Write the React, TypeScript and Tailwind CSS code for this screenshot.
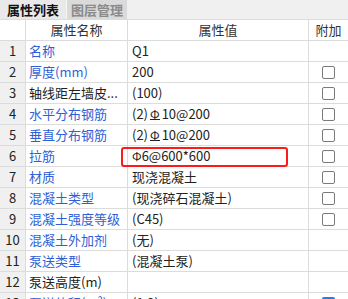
import React from 'react';

type Row = {
  no: number;
  name: string;
  blue: boolean;
  value: React.ReactNode;
  check: 'none' | 'empty' | 'checked';
};

// HRB400 steel grade symbol: Φ with a base bar
function Steel3() {
  return <span className="inline-block border-b border-[#222] leading-[11px] text-[12px] mx-[2px]">Φ</span>;
}

const ROWS: Row[] = [
  { no: 1, name: '名称', blue: true, value: 'Q1', check: 'none' },
  { no: 2, name: '厚度(mm)', blue: true, value: '200', check: 'empty' },
  { no: 3, name: '轴线距左墙皮...', blue: false, value: '(100)', check: 'empty' },
  { no: 4, name: '水平分布钢筋', blue: true, value: <>(2)<Steel3 />10@200</>, check: 'empty' },
  { no: 5, name: '垂直分布钢筋', blue: true, value: <>(2)<Steel3 />10@200</>, check: 'empty' },
  { no: 6, name: '拉筋', blue: true, value: <><span className="text-[12px]">Φ</span>6@600*600</>, check: 'empty' },
  { no: 7, name: '材质', blue: true, value: '现浇混凝土', check: 'empty' },
  { no: 8, name: '混凝土类型', blue: true, value: '(现浇碎石混凝土)', check: 'empty' },
  { no: 9, name: '混凝土强度等级', blue: true, value: '(C45)', check: 'empty' },
  { no: 10, name: '混凝土外加剂', blue: true, value: '(无)', check: 'none' },
  { no: 11, name: '泵送类型', blue: true, value: '(混凝土泵)', check: 'none' },
  { no: 12, name: '泵送高度(m)', blue: false, value: '', check: 'none' },
  { no: 13, name: '泵送体积(m³)', blue: true, value: '(1.2)', check: 'checked' },
];

const FONT = "font-['Microsoft_YaHei','Noto_Sans_CJK_SC',sans-serif]";

export default function App() {
  return (
    <div className={`w-[348px] h-[299px] overflow-hidden bg-white text-[13px] text-[#222] ${FONT}`}>
      {/* Tabs */}
      <div className="flex h-[20px] bg-[#f0f0f0] border-b border-[#dcdcdc]">
        <div className="w-[67px] bg-[#e9e9e9] flex items-center justify-center font-bold text-[#111] border-r border-[#f7f7f7]">
          属性列表
        </div>
        <div className="w-[60px] bg-[#dadada] flex items-center justify-center font-bold text-[#8a8a8a]">
          图层管理
        </div>
      </div>

      <div className="relative">
        {/* Header */}
        <div className="grid grid-cols-[26px_102px_181px_39px] h-[21px] border-b border-[#dcdcdc] text-[#333]">
          <div className="border-r border-[#dcdcdc]" />
          <div className="border-r border-[#dcdcdc] flex items-center justify-center">属性名称</div>
          <div className="border-r border-[#dcdcdc] flex items-center justify-center">属性值</div>
          <div className="flex items-center justify-center">附加</div>
        </div>

        {ROWS.map((r) => (
          <div key={r.no} className="grid grid-cols-[26px_102px_181px_39px] h-[21px] border-b border-[#dcdcdc]">
            <div className="bg-[#f0f0f0] border-r border-[#dcdcdc] flex items-center justify-center text-[#222]">
              {r.no}
            </div>
            <div className={`border-r border-[#dcdcdc] flex items-center pl-[3px] whitespace-nowrap ${r.blue ? 'text-[#2f5fd6]' : 'text-[#222]'}`}>
              {r.name}
            </div>
            <div className="border-r border-[#dcdcdc] flex items-center pl-[4px] whitespace-nowrap">{r.value}</div>
            <div className="flex items-center justify-center">
              {r.check === 'empty' && (
                <div className="w-[13px] h-[13px] rounded-[2px] border border-[#7a7a7a] bg-white" />
              )}
              {r.check === 'checked' && (
                <div className="w-[13px] h-[13px] rounded-[2px] bg-[#2a7ae2]" />
              )}
            </div>
          </div>
        ))}

        {/* red highlight around 拉筋 value */}
        <div className="absolute left-[121px] top-[127px] w-[167px] h-[20px] border-[2.5px] border-[#ff1a1a] rounded-[3px]" />
      </div>
    </div>
  );
}
